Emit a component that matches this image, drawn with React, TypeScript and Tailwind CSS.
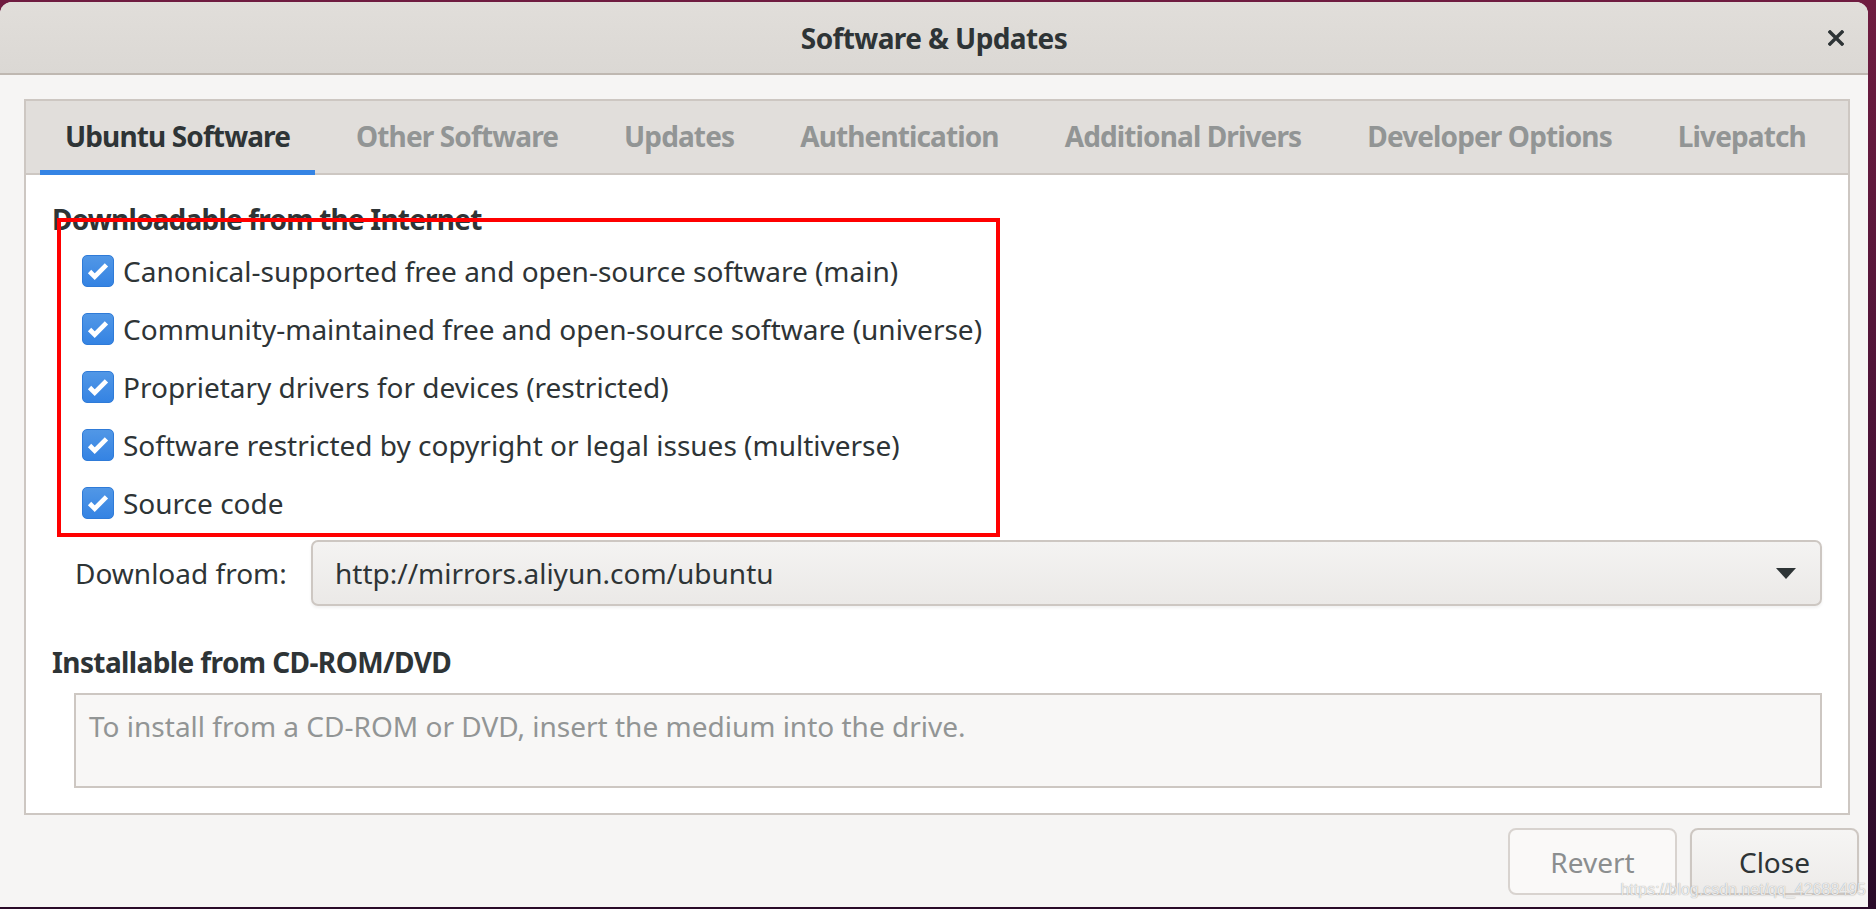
import React from 'react';

const tabs = [
    'Ubuntu Software',
    'Other Software',
    'Updates',
    'Authentication',
    'Additional Drivers',
    'Developer Options',
    'Livepatch',
];

const sources = [
    'Canonical-supported free and open-source software (main)',
    'Community-maintained free and open-source software (universe)',
    'Proprietary drivers for devices (restricted)',
    'Software restricted by copyright or legal issues (multiverse)',
    'Source code',
];

const CheckBox: React.FC = () => (
    <div className="flex h-[32px] w-[32px] shrink-0 items-center justify-center rounded-[5px] border border-[#2f7bd8] bg-gradient-to-b from-[#5197e6] to-[#3483e3]">
        <svg width="32" height="32" viewBox="0 0 32 32" fill="none">
            <path d="M7 16.5l5.5 5.5L25 9.5" stroke="#ffffff" strokeWidth="5" strokeLinejoin="miter" />
        </svg>
    </div>
);

const App: React.FC = () => {
    return (
        <div className="h-[909px] w-full overflow-hidden bg-gradient-to-b from-[#6f1c40] via-[#4a1236] to-[#2a0b29] pt-[2px] pr-[8px] pb-[2px] font-['Noto_Sans',sans-serif] text-[#2e3436]">
            <div className="relative flex h-full flex-col overflow-hidden rounded-t-[12px] bg-[#f6f5f4]">
                {/* title bar */}
                <div className="grid h-[73px] shrink-0 grid-cols-[1fr_auto_1fr] items-center border-b-2 border-[#bfb8b1] bg-gradient-to-b from-[#e1deda] to-[#dbd8d4]">
                    <div />
                    <span className="whitespace-nowrap text-[28px] font-bold leading-[38px] tracking-[-0.6px]">Software &amp; Updates</span>
                    <div className="flex justify-end pr-[24px]">
                        <svg width="16" height="16" viewBox="0 0 16 16">
                            <path d="M2 2L14 14M14 2L2 14" stroke="#2e3436" strokeWidth="3.4" strokeLinecap="square" />
                        </svg>
                    </div>
                </div>

                {/* body */}
                <div className="flex flex-1 flex-col">
                    <div className="ml-[24px] mr-[18px] mt-[24px] flex h-[716px] flex-col border-2 border-[#cdc7c2]">
                        <div className="flex h-[74px] shrink-0 gap-4 border-b-2 border-[#cdc7c2] bg-[#e1dedb] pl-[14px]">
                            {tabs.map((tab, i) => (
                                <div
                                    key={tab}
                                    className={`-mb-[2px] h-[74px] shrink-0 whitespace-nowrap px-[25px] pt-[16px] text-[28px] font-bold leading-[38px] tracking-[-0.88px] ${i === 0 ? 'border-b-[5px] border-[#3584e4] text-[#2e3436]' : 'text-[#929595]'}`}
                                >
                                    {tab}
                                </div>
                            ))}
                        </div>

                        <div className="flex flex-1 flex-col bg-white px-[26px] pt-[25px]">
                            <div className="whitespace-nowrap text-[28px] font-bold leading-[38px] tracking-[-0.8px]">Downloadable from the Internet</div>
                            <div className="mt-[4px] flex flex-col">
                                {sources.map((s) => (
                                    <div key={s} className="flex h-[58px] items-center gap-[9px] pl-[30px]">
                                        <CheckBox />
                                        <span className="whitespace-nowrap text-[28px] leading-[38px]">{s}</span>
                                    </div>
                                ))}
                            </div>

                            <div className="mt-[8px] flex h-[66px] items-center">
                                <div className="w-[259px] shrink-0 whitespace-nowrap pl-[23px] text-[28px] leading-[38px]">Download from:</div>
                                <div className="flex h-full flex-1 items-center justify-between rounded-[7px] border-2 border-[#cdc7c2] bg-gradient-to-b from-[#f4f3f2] to-[#ebe9e7] pl-[22px] pr-[24px] shadow-[0_2px_3px_rgba(0,0,0,0.06)]">
                                    <span className="text-[28px] leading-[38px]">http://mirrors.aliyun.com/ubuntu</span>
                                    <svg width="20" height="11" viewBox="0 0 20 11">
                                        <path d="M0 0H20L10 11Z" fill="#2e3436" />
                                    </svg>
                                </div>
                            </div>

                            <div className="mt-[37px] whitespace-nowrap text-[28px] font-bold leading-[38px] tracking-[-0.6px]">Installable from CD-ROM/DVD</div>
                            <div className="ml-[22px] mt-[12px] h-[95px] border-2 border-[#cdc7c2] bg-[#f8f7f6] pl-[13px] pt-[12px] text-[28px] leading-[38px] text-[#929595]">
                                To install from a CD-ROM or DVD, insert the medium into the drive.
                            </div>
                        </div>
                    </div>

                    <div className="mt-[13px] flex h-[67px] justify-end gap-[13px] pr-[9px]">
                        <button className="w-[169px] rounded-[8px] border-2 border-[#d8d3cf] bg-[#faf9f8] text-[28px] leading-[38px] text-[#8b8e8f]">
                            Revert
                        </button>
                        <button className="w-[169px] rounded-[8px] border-2 border-[#cdc7c2] bg-gradient-to-b from-[#f6f5f4] to-[#edebe9] text-[28px] leading-[38px] text-[#2e3436] shadow-[0_1px_2px_rgba(0,0,0,0.07)]">
                            Close
                        </button>
                    </div>
                </div>

                {/* annotation box drawn over the screenshot */}
                <div className="pointer-events-none absolute left-[57px] top-[216px] h-[319px] w-[943px] border-4 border-[#ff0000]" />

                {/* watermark */}
                <span className="pointer-events-none absolute bottom-[8px] right-[2px] font-['Liberation_Sans',sans-serif] text-[16px] leading-[18px] text-white/80 [text-shadow:0_0_1px_#888]">
                    https://blog.csdn.net/qq_42688495
                </span>
            </div>
        </div>
    );
};

export default App;
